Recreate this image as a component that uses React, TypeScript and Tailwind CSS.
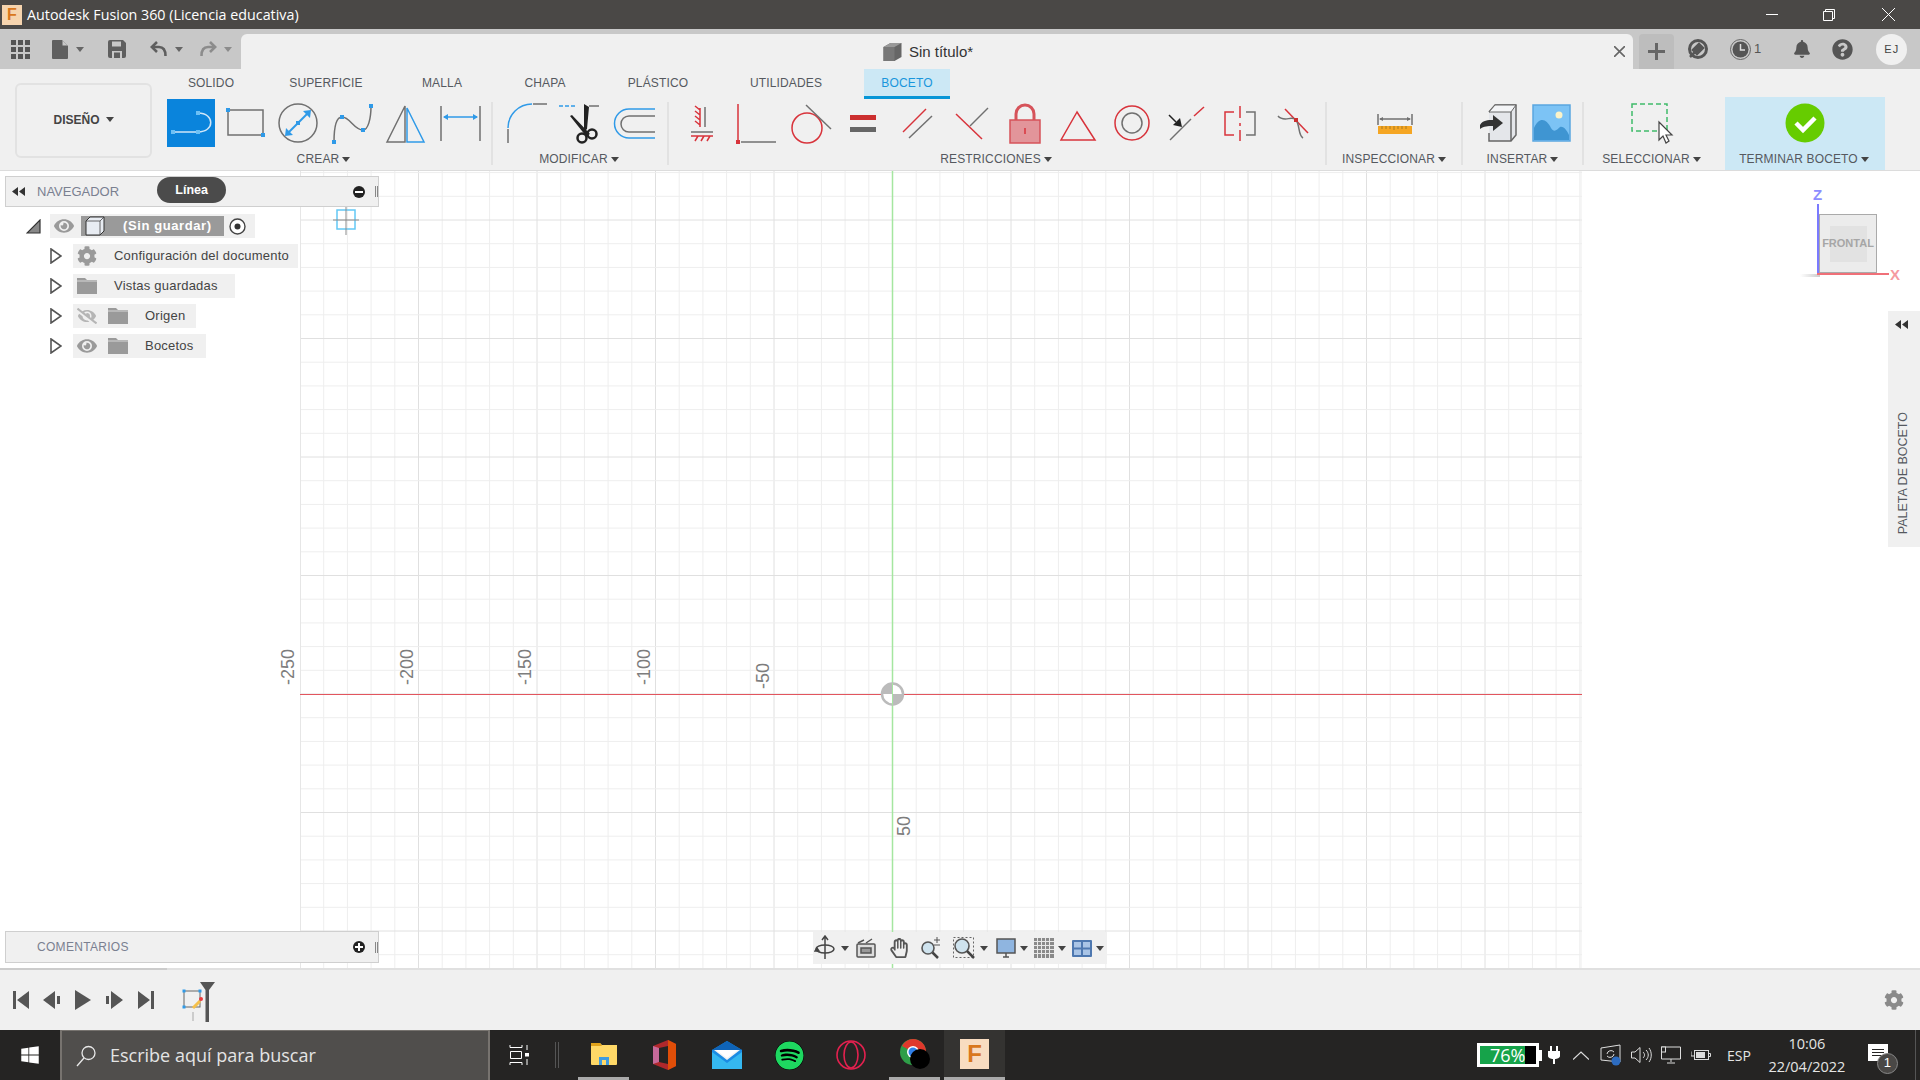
import React from "react";
import { FaBell, FaCog, FaEye, FaEyeSlash, FaQuestionCircle, FaRegHandPaper, FaSpotify, FaWindows } from "react-icons/fa";

const BLUE = "#2f9ae8";
const GRAY = "#707070";
const RED = "#d8333b";

const Caret: React.FC<{ className?: string; color?: string }> = ({ className = "", color = "#444" }) => (
  <svg width="8" height="5" viewBox="0 0 8 5" className={className}>
    <path d="M0 0H8L4 5Z" fill={color} />
  </svg>
);

const Rewind: React.FC = () => (
  <svg width="13" height="9" viewBox="0 0 13 9">
    <path d="M6 0V9L0 4.5ZM13 0V9L7 4.5Z" fill="#333" />
  </svg>
);

const Pt: React.FC<{ x: number; y: number; c?: string }> = ({ x, y, c = BLUE }) => (
  <rect x={x - 2} y={y - 2} width="4" height="4" fill={c} />
);

const Ic: React.FC<{ children: React.ReactNode }> = ({ children }) => (
  <svg width="48" height="48" viewBox="0 0 48 48" fill="none" strokeWidth="1.5">
    {children}
  </svg>
);

const tools = {
  line: (
    <div className="w-[48px] h-[48px] bg-[#0a84dc]">
      <Ic>
        <path d="M6 33H31" stroke="#cfe6f8" />
        <path d="M31 14C48 14 48 33 31 33" stroke="#cfe6f8" />
        <Pt x={6} y={33} c="#6cc0f5" />
        <Pt x={31} y={33} c="#6cc0f5" />
        <Pt x={31} y={14} c="#6cc0f5" />
      </Ic>
    </div>
  ),
  rect: (
    <Ic>
      <rect x="7" y="11" width="35" height="25" stroke={GRAY} />
      <Pt x={7} y={11} />
      <Pt x={42} y={36} />
    </Ic>
  ),
  circle: (
    <Ic>
      <circle cx="24" cy="24" r="19" stroke={GRAY} />
      <path d="M13 35L35 13" stroke={BLUE} strokeWidth="2" />
      <path d="M11 37L12 29L19 36ZM37 11L36 19L29 12Z" fill={BLUE} />
      <Pt x={24} y={24} />
    </Ic>
  ),
  spline: (
    <Ic>
      <path d="M6 43C6 30 8 18 14 18C22 18 26 31 35 31C40 31 43 20 43 7" stroke={GRAY} />
      <Pt x={6} y={43} />
      <Pt x={14} y={18} />
      <Pt x={35} y={31} />
      <Pt x={43} y={7} />
    </Ic>
  ),
  mirror: (
    <Ic>
      <path d="M5 43L23 7V43Z" stroke={GRAY} />
      <path d="M25 9L42 43H25Z" stroke={BLUE} />
    </Ic>
  ),
  dim: (
    <Ic>
      <path d="M6 7V42M45 7V42" stroke={GRAY} />
      <path d="M9 18H42" stroke={BLUE} />
      <path d="M8 18L13 15V21ZM43 18L38 15V21Z" fill={BLUE} />
    </Ic>
  ),
  fillet: (
    <Ic>
      <path d="M5 30V44M30 5H44" stroke={GRAY} />
      <path d="M5 29A24 24 0 0 1 29 5" stroke={BLUE} />
    </Ic>
  ),
  trim: (
    <Ic>
      <path d="M2 7H20" stroke={BLUE} strokeDasharray="4 2" />
      <path d="M32 7H42" stroke={GRAY} />
      <path d="M27 5L32 8L30 30L27 33ZM13 17L15 16L33 35L29 37Z" fill="#222" />
      <circle cx="25" cy="39" r="4.5" stroke="#222" strokeWidth="2.5" />
      <circle cx="35" cy="35" r="4.5" stroke="#222" strokeWidth="2.5" />
    </Ic>
  ),
  offset: (
    <Ic>
      <path d="M44 10H18A14.5 14.5 0 0 0 18 39H44" stroke={BLUE} />
      <path d="M44 17H18A8 8 0 0 0 18 33H44" stroke={GRAY} />
    </Ic>
  ),
  fix: (
    <Ic>
      <path d="M27 8V28M13 33H35" stroke={GRAY} />
      <path d="M13 37H35M22 9V28M22 11L17 7M22 16L17 12M22 21L17 17M22 26L17 22M17 42L20 37M23 42L26 37M29 42L32 37" stroke={RED} />
    </Ic>
  ),
  coincident: (
    <Ic>
      <path d="M6 5V41" stroke={RED} />
      <path d="M9 43H44" stroke={GRAY} />
      <Pt x={6} y={43} c={RED} />
    </Ic>
  ),
  tangent: (
    <Ic>
      <circle cx="22" cy="29" r="15" stroke={RED} />
      <path d="M21 6L46 30" stroke={GRAY} />
    </Ic>
  ),
  equal: (
    <Ic>
      <rect x="11" y="16" width="26" height="5" fill="#cc2f2f" />
      <rect x="11" y="28" width="26" height="5" fill="#666" />
    </Ic>
  ),
  parallel: (
    <Ic>
      <path d="M10 33L33 10" stroke={RED} />
      <path d="M16 39L39 17" stroke={GRAY} />
    </Ic>
  ),
  perp: (
    <Ic>
      <path d="M9 15L35 40" stroke={RED} />
      <path d="M23 27L41 9" stroke={GRAY} />
    </Ic>
  ),
  lock: (
    <Ic>
      <path d="M15 21V15A9 9 0 0 1 33 15V21" stroke="#d6535a" strokeWidth="3" />
      <rect x="9" y="21" width="30" height="23" fill="#e2959a" stroke="#d6535a" strokeWidth="1.5" />
      <path d="M24 29V35" stroke={RED} />
    </Ic>
  ),
  triangle: (
    <Ic>
      <path d="M23 13L7 41H41Z" stroke={RED} />
    </Ic>
  ),
  concentric: (
    <Ic>
      <circle cx="24" cy="24" r="17" stroke={RED} />
      <circle cx="24" cy="24" r="10" stroke={GRAY} />
    </Ic>
  ),
  midpoint: (
    <Ic>
      <path d="M8 41L29 20" stroke={GRAY} />
      <path d="M32 17L42 8" stroke={RED} />
      <path d="M7 16L14 23" stroke="#222" />
      <path d="M20 28L11 26L18 19Z" fill="#222" />
    </Ic>
  ),
  symmetry: (
    <Ic>
      <path d="M24 7V19M24 24V27M24 31V42" stroke={RED} />
      <path d="M18 13H9V36H18" stroke={RED} />
      <path d="M30 13H39V36H30" stroke={GRAY} />
    </Ic>
  ),
  intersect: (
    <Ic>
      <path d="M15 10L38 34" stroke={RED} />
      <path d="M8 17C14 24 22 16 26 21C30 26 28 36 33 39" stroke={GRAY} />
      <Pt x={26} y={21} c="#cc2f2f" />
    </Ic>
  ),
  ruler: (
    <Ic>
      <path d="M7 15V26M41 15V26" stroke={GRAY} />
      <path d="M9 20H39" stroke={GRAY} />
      <path d="M8 20L12 18V22ZM40 20L36 18V22Z" fill={GRAY} />
      <rect x="7" y="27" width="34" height="8" fill="#f5a623" />
      <path d="M11 27V30M15 27V30M19 27V30M23 27V31M27 27V30M31 27V30M35 27V30" stroke="#a87a20" strokeWidth="1" />
    </Ic>
  ),
  insert: (
    <Ic>
      <path d="M14 13L20 6H41V36L36 42H14V34" fill="#e4e6ea" stroke="#666" />
      <path d="M20 6H41L36 13H14Z" fill="#f4f5f7" stroke="#666" strokeWidth="1" />
      <path d="M36 13V42" stroke="#666" />
      <path d="M5 26C8 21 13 21 18 21V16L28 24L18 32V27C13 27 9 27 5 30Z" fill="#333" />
    </Ic>
  ),
  image: (
    <Ic>
      <rect x="6" y="6" width="37" height="36" fill="#7cc3f5" stroke="#5aa6e0" />
      <circle cx="32" cy="16" r="3.5" fill="#fbf3c8" />
      <path d="M7 41V29C12 18 19 19 24 29C27 34 30 31 33 28C37 27 40 32 42 36V41Z" fill="#3f95d2" />
    </Ic>
  ),
  select: (
    <Ic>
      <rect x="6" y="5" width="35" height="27" stroke="#3fbb6a" strokeDasharray="5 3" />
      <path d="M33 23V41L37 37L40 44L43 42L40 36H46Z" fill="#fff" stroke="#444" strokeWidth="1.2" />
    </Ic>
  ),
  finish: (
    <Ic>
      <circle cx="24" cy="24" r="19.5" fill="#66cc00" />
      <path d="M15 24L22 31L34 19" stroke="#fff" strokeWidth="4.5" />
    </Ic>
  ),
};

const Group: React.FC<{
  label: string;
  icons: React.ReactNode[];
  width: string;
  pad: string;
  step: string;
  labelPad?: string;
  sep?: boolean;
}> = ({ label, icons, width, pad, step, labelPad = "", sep = true }) => (
  <div className={`${width} flex shrink-0`}>
    <div className="flex-1 flex flex-col">
      <div className={`${pad} flex h-[50px] items-end`}>
        {icons.map((icon, i) => (
          <div key={i} className={`${step} flex justify-center`}>
            {icon}
          </div>
        ))}
      </div>
      <div className={`${labelPad} flex items-center justify-center gap-[3px] mt-[3px] text-[12px] tracking-[0.15px] text-[#55595f]`}>
        {label}
        <Caret />
      </div>
    </div>
    {sep && <div className="w-[2px] h-[63px] mt-[5px] bg-[#e2e2e2]" />}
  </div>
);

const TitleBar: React.FC = () => (
  <div className="h-[29px] bg-[#4a4846] flex items-center text-white">
    <div className="ml-[2px] w-[20px] h-[20px] bg-[#f6d4ae] flex items-center justify-center text-[#d9771c] text-[16px] font-bold">F</div>
    <span className="ml-[5px] text-[14.3px] font-['Open_Sans',sans-serif]">Autodesk Fusion 360 (Licencia educativa)</span>
    <div className="ml-auto flex items-center">
      <div className="w-[12px] h-px bg-white mr-[45px]" />
      <svg width="12" height="12" viewBox="0 0 12 12" fill="none" stroke="#fff" className="mr-[47px]">
        <path d="M0.5 2.5H9.5V11.5H0.5ZM2.5 2.5V0.5H11.5V9.5H9.5" />
      </svg>
      <svg width="13" height="13" viewBox="0 0 13 13" stroke="#fff" className="mr-[25px]">
        <path d="M0 0L13 13M13 0L0 13" />
      </svg>
    </div>
  </div>
);

const Undo: React.FC<{ color: string; className: string }> = ({ color, className }) => (
  <svg width="17" height="16" viewBox="0 0 17 16" fill="none" stroke={color} strokeWidth="2.6" className={className}>
    <path d="M7 1L1.8 6L7 11" />
    <path d="M2 6H9C13 6 15.5 9 15.5 15" />
  </svg>
);

const QuickBar: React.FC = () => (
  <div className="h-[40px] bg-[#c8c8c8] flex items-end">
    <div className="w-[241px] h-[40px] flex items-center shrink-0">
      <div className="ml-[11px] grid grid-cols-3 gap-[2px]">
        {Array.from({ length: 9 }).map((_, i) => (
          <div key={i} className="w-[5px] h-[5px] bg-[#555]" />
        ))}
      </div>
      <svg width="16" height="19" viewBox="0 0 16 19" className="ml-[22px]">
        <path d="M0 1Q0 0 1 0H10L16 6V18Q16 19 15 19H1Q0 19 0 18Z" fill="#5f5f5f" />
        <path d="M10.5 0.5L15.5 5.5H10.5Z" fill="#c8c8c8" />
      </svg>
      <Caret className="ml-[8px]" color="#666" />
      <svg width="18" height="18" viewBox="0 0 18 18" className="ml-[24px]">
        <path d="M0 2Q0 0 2 0H15L18 3V16Q18 18 16 18H2Q0 18 0 16Z" fill="#5f5f5f" />
        <rect x="4" y="1.5" width="9" height="5" fill="#c8c8c8" />
        <rect x="4" y="11" width="10" height="7" fill="#c8c8c8" />
        <rect x="6" y="12.5" width="6" height="5.5" fill="#5f5f5f" />
      </svg>
      <Undo color="#5f5f5f" className="ml-[24px]" />
      <Caret className="ml-[8px]" color="#666" />
      <Undo color="#8c8c8c" className="ml-[17px] -scale-x-100" />
      <Caret className="ml-[7px]" color="#8c8c8c" />
    </div>
    <div className="w-[1392px] h-[35px] bg-[#f0f0f0] rounded-t-[6px] flex items-center shrink-0">
      <div className="flex-1 flex items-center justify-center">
        <svg width="21" height="20" viewBox="0 0 20 20">
          <path d="M1 5L8 1H19V15L12 19H1Z" fill="#666" />
          <path d="M1 5L8 1H19L12 5Z" fill="#999" />
          <path d="M1 5H12V19H1Z" fill="#777" />
        </svg>
        <span className="ml-[6px] mt-[1px] text-[15px] text-[#333]">Sin título*</span>
      </div>
      <svg width="11" height="11" viewBox="0 0 11 11" stroke="#666" strokeWidth="1.6" className="mr-[8px]">
        <path d="M0 0L11 11M11 0L0 11" />
      </svg>
    </div>
    <div className="ml-[6px] w-[35px] h-[35px] bg-[#bdbdbd] rounded-t-[4px] flex items-center justify-center text-[#666] shrink-0">
      <svg width="17" height="17" viewBox="0 0 17 17">
        <path d="M7 0H10V7H17V10H10V17H7V10H0V7H7Z" fill="#666" />
      </svg>
    </div>
    <div className="h-[40px] flex items-center">
      <svg width="20" height="20" viewBox="0 0 20 20" className="ml-[14px]">
        <circle cx="10" cy="10" r="8.5" fill="none" stroke="#555" strokeWidth="3" />
        <path d="M5 11L11 5L15 9L9 15ZM2 18L7 13" fill="#555" stroke="#555" strokeWidth="2.5" />
      </svg>
      <svg width="21" height="21" viewBox="0 0 21 21" fill="none" className="ml-[22px]">
        <circle cx="10.5" cy="10.5" r="10" stroke="#666" />
        <circle cx="10.5" cy="10.5" r="8" fill="#555" />
        <path d="M10.5 5V11H15" stroke="#ddd" strokeWidth="1.5" />
      </svg>
      <span className="ml-[3px] text-[13px] text-[#555]">1</span>
      <FaBell className="ml-[32px] text-[#555] text-[18px]" />
      <FaQuestionCircle className="ml-[21px] text-[#555] text-[21px]" />
      <div className="ml-[23px] w-[31px] h-[31px] rounded-full bg-[#f0f0f0] flex items-center justify-center text-[11px] text-[#444] tracking-[1px]">EJ</div>
    </div>
  </div>
);

const Ribbon: React.FC = () => {
  const tabs = [
    { name: "SOLIDO", w: "w-[104px]" },
    { name: "SUPERFICIE", w: "w-[126px]" },
    { name: "MALLA", w: "w-[106px]" },
    { name: "CHAPA", w: "w-[100px]" },
    { name: "PLÁSTICO", w: "w-[126px]" },
    { name: "UTILIDADES", w: "w-[130px]" },
  ];
  return (
    <div className="h-[102px] bg-[#f0f0f0] border-b border-[#dcdcdc] flex">
      <div className="ml-[15px] mt-[14px] pb-[2px] w-[137px] h-[75px] shrink-0 border-2 border-[#e2e2e2] rounded-[6px] flex items-center justify-center gap-[6px] text-[12px] font-bold text-[#444]">
        DISEÑO
        <Caret />
      </div>
      <div className="ml-[7px] flex flex-col">
        <div className="h-[28px] flex items-start text-[12px] tracking-[0.15px] text-[#55595f]">
          {tabs.map((t) => (
            <div key={t.name} className={`${t.w} h-[27px] flex items-center justify-center`}>
              {t.name}
            </div>
          ))}
          <div className="ml-[13px] w-[86px] h-[30px] flex items-center justify-center bg-[#cce8f5] border-b-[3px] border-[#0696d7] text-[#1a96dc]">BOCETO</div>
        </div>
        <div className="flex flex-1 pl-[5px]">
          <Group
            label="CREAR"
            width="w-[329px]"
            pad="pl-0"
            step="w-[53.7px]"
            labelPad="pr-[8px]"
            icons={[tools.line, tools.rect, tools.circle, tools.spline, tools.mirror, tools.dim]}
          />
          <Group label="MODIFICAR" width="w-[176px]" pad="pl-[7px]" step="w-[54px]" labelPad="pr-[2px]" icons={[tools.fillet, tools.trim, tools.offset]} />
          <Group
            label="RESTRICCIONES"
            width="w-[658px]"
            pad="pl-[6px]"
            step="w-[53.8px]"
            labelPad="pr-[2px]"
            icons={[
              tools.fix,
              tools.coincident,
              tools.tangent,
              tools.equal,
              tools.parallel,
              tools.perp,
              tools.lock,
              tools.triangle,
              tools.concentric,
              tools.midpoint,
              tools.symmetry,
              tools.intersect,
            ]}
          />
          <Group label="INSPECCIONAR" width="w-[136px]" pad="pl-[44px]" step="w-[48px]" icons={[tools.ruler]} />
          <Group label="INSERTAR" width="w-[121px]" pad="pl-[10px]" step="w-[52px]" icons={[tools.insert, tools.image]} />
          <Group label="SELECCIONAR" width="w-[141px]" pad="pl-[42px]" step="w-[48px]" labelPad="pr-[6px]" sep={false} icons={[tools.select]} />
          <div className="w-[160px] bg-[#cce8f5]">
            <Group label="TERMINAR BOCETO" width="w-[160px]" pad="pl-[56px]" step="w-[48px]" labelPad="pr-[2px]" sep={false} icons={[tools.finish]} />
          </div>
        </div>
      </div>
    </div>
  );
};

const GridLines: React.FC = () => {
  const step = 23.7;
  const xs: number[] = [];
  const ys: number[] = [];
  for (let i = -25; i <= 30; i++) xs.push(i);
  for (let i = -22; i <= 15; i++) ys.push(i);
  return (
    <svg width="1282" height="797" className="absolute left-[300px] top-0">
      {xs.map((i) => {
        const x = 592.5 + i * step;
        if (x < 0 || x > 1281) return null;
        return <line key={i} x1={x} x2={x} y1="0" y2="797" stroke={i % 5 === 0 ? "#e0e0e0" : "#eeeeee"} strokeWidth="1" />;
      })}
      {ys.map((i) => {
        const y = 523 + i * step;
        if (y < 0 || y > 797) return null;
        return <line key={i} x1="0" x2="1282" y1={y} y2={y} stroke={i % 5 === 0 ? "#e0e0e0" : "#eeeeee"} strokeWidth="1" />;
      })}
      <line x1="0" x2="0" y1="0" y2="797" stroke="#e6e6e6" strokeWidth="2" />
      <line x1="1281" x2="1281" y1="0" y2="797" stroke="#eeeeee" strokeWidth="1" />
      <line x1="592.5" x2="592.5" y1="0" y2="797" stroke="#a5e6a0" strokeWidth="1.5" />
      <line x1="0" x2="1282" y1="523.5" y2="523.5" stroke="#e2555e" strokeWidth="1" />
      <circle cx="592.5" cy="523" r="10.5" fill="#fff" stroke="#bbb" strokeWidth="2.5" />
      <path d="M592.5 523V512.5A10.5 10.5 0 0 0 582 523ZM592.5 523V533.5A10.5 10.5 0 0 0 603 523Z" fill="#bbb" />
      <line x1="592.5" x2="592.5" y1="512" y2="534" stroke="#a5e6a0" strokeWidth="1" />
    </svg>
  );
};

const AxisLabel: React.FC<{ text: string; x: string; y: string }> = ({ text, x, y }) => (
  <span className={`absolute ${x} ${y} text-[18px] leading-none text-[#7d7d7d] [writing-mode:vertical-rl] rotate-180`}>{text}</span>
);

const Folder: React.FC = () => (
  <svg width="20" height="16" viewBox="0 0 20 16">
    <path d="M0 0H8L10 2H20V16H0Z" fill="#9a9a9a" />
    <path d="M0 3H20" stroke="#f0f0f0" strokeWidth="0.7" />
  </svg>
);

const Arrow: React.FC = () => (
  <svg width="12" height="16" viewBox="0 0 12 16" fill="none" stroke="#555" strokeWidth="1.6">
    <path d="M1 1L11 8L1 15Z" />
  </svg>
);

const TreeRow: React.FC<{ icons: React.ReactNode; label: string; width: string }> = ({ icons, label, width }) => (
  <div className="flex items-center h-[24px] mb-[6px]">
    <div className="w-[73px] pl-[50px] flex items-center">
      <Arrow />
    </div>
    <div className={`${width} h-[24px] bg-[#f0f0f0] flex items-center pl-[3px]`}>
      {icons}
      <span className="ml-[17px] text-[13px] tracking-[0.22px] text-[#444]">{label}</span>
    </div>
  </div>
);

const Navigator: React.FC = () => (
  <div className="absolute left-0 top-[5px]">
    <div className="ml-[5px] w-[374px] h-[31px] bg-[#f0f0f0] border border-[#cfcfcf] flex items-center">
      <div className="ml-[6px]">
        <Rewind />
      </div>
      <span className="ml-[12px] text-[13px] text-[#7a8090]">NAVEGADOR</span>
      <div className="ml-[38px] w-[69px] h-[26px] -mt-[3px] rounded-full bg-[#4b4b4b] text-white text-[12.5px] font-bold flex items-center justify-center">Línea</div>
      <div className="ml-auto w-[12px] h-[12px] mr-[10px] rounded-full bg-[#222] flex items-center justify-center">
        <div className="w-[8px] h-[2px] bg-white" />
      </div>
      <div className="w-[3px] h-[11px] border-x border-[#888]" />
    </div>
    <div className="mt-[7px] flex items-center h-[24px] mb-[6px]">
      <div className="w-[50px] pl-[26px]">
        <svg width="15" height="15" viewBox="0 0 15 15">
          <path d="M14 1V14H1Z" fill="#888" stroke="#333" strokeWidth="1.2" />
        </svg>
      </div>
      <div className="w-[205px] h-[24px] bg-[#f0f0f0] flex items-center">
        <FaEye className="ml-[4px] text-[#9a9a9a] text-[20px]" />
        <div className="ml-[7px] w-[143px] h-[20px] bg-[#9a9a9a] flex items-center">
          <svg width="20" height="20" viewBox="0 0 20 20" className="ml-[4px]">
            <path d="M1 5L5 1H19V15L15 19H1Z" fill="#e8ecf2" stroke="#333" />
            <path d="M15 5V19M15 5L19 1M1 5H15" fill="none" stroke="#444" strokeWidth="0.8" />
          </svg>
          <span className="ml-[18px] text-[13px] font-bold tracking-[0.6px] text-white">(Sin guardar)</span>
        </div>
        <svg width="17" height="17" viewBox="0 0 17 17" className="ml-[5px]">
          <circle cx="8.5" cy="8.5" r="7.5" fill="#fff" stroke="#444" strokeWidth="1.4" />
          <circle cx="8.5" cy="8.5" r="3" fill="#333" />
        </svg>
      </div>
    </div>
    <TreeRow width="w-[225px]" label="Configuración del documento" icons={<FaCog className="ml-[1px] text-[#9a9a9a] text-[20px]" />} />
    <TreeRow width="w-[162px]" label="Vistas guardadas" icons={<div className="ml-[1px]"><Folder /></div>} />
    <TreeRow
      width="w-[123px]"
      label="Origen"
      icons={
        <>
          <FaEyeSlash className="ml-[1px] text-[#b5b5b5] text-[20px]" />
          <div className="ml-[11px]">
            <Folder />
          </div>
        </>
      }
    />
    <TreeRow
      width="w-[133px]"
      label="Bocetos"
      icons={
        <>
          <FaEye className="ml-[1px] text-[#9a9a9a] text-[20px]" />
          <div className="ml-[11px]">
            <Folder />
          </div>
        </>
      }
    />
  </div>
);

const Comments: React.FC = () => (
  <div className="absolute left-[5px] top-[760px] w-[374px] h-[32px] bg-[#f0f0f0] border border-[#cfcfcf] flex items-center">
    <span className="ml-[31px] text-[12px] tracking-[0.3px] text-[#7a8090]">COMENTARIOS</span>
    <div className="ml-auto w-[12px] h-[12px] mr-[10px] rounded-full bg-[#222] flex items-center justify-center text-white">
      <svg width="8" height="8" viewBox="0 0 8 8">
        <path d="M3 0H5V3H8V5H5V8H3V5H0V3H3Z" fill="#fff" />
      </svg>
    </div>
    <div className="w-[3px] h-[11px] border-x border-[#888]" />
  </div>
);

const NavBar: React.FC = () => (
  <div className="absolute left-[813px] top-[761px] w-[294px] h-[32px] bg-[#f0f0f0] flex items-center pl-[1px]">
    <svg width="22" height="26" viewBox="0 0 22 26" fill="none" stroke="#444" strokeWidth="1.5">
      <path d="M11 2V24M8 5L11 1L14 5" />
      <ellipse cx="11" cy="14" rx="9" ry="4" />
      <path d="M3 13L1 16H5Z" fill="#444" />
    </svg>
    <Caret className="ml-[5px]" />
    <svg width="20" height="20" viewBox="0 0 20 20" fill="none" stroke="#555" strokeWidth="1.5" className="ml-[7px]">
      <rect x="1" y="6" width="18" height="13" rx="1" fill="#ddd" />
      <rect x="5" y="10" width="10" height="5" fill="#999" />
      <path d="M2 5L8 2M10 5L16 1" />
    </svg>
    <FaRegHandPaper className="ml-[13px] text-[#555] text-[20px]" />
    <svg width="22" height="22" viewBox="0 0 22 22" fill="none" className="ml-[11px]">
      <circle cx="8" cy="11" r="6" fill="#cfe3ee" stroke="#555" strokeWidth="1.6" />
      <path d="M12.5 15.5L18 21" stroke="#444" strokeWidth="2.5" />
      <path d="M14 3H20M17 0V6M14 8H20" stroke="#555" />
    </svg>
    <svg width="22" height="22" viewBox="0 0 22 22" fill="none" className="ml-[11px]">
      <rect x="0.5" y="0.5" width="20" height="20" stroke="#666" strokeDasharray="2 2" />
      <circle cx="9" cy="9" r="7" fill="#cfe3ee" stroke="#555" strokeWidth="1.6" />
      <path d="M14 14L21 21" stroke="#444" strokeWidth="2.5" />
    </svg>
    <Caret className="ml-[5px]" />
    <svg width="20" height="20" viewBox="0 0 20 20" fill="none" className="ml-[8px]">
      <rect x="1" y="1" width="18" height="14" fill="#8fb5e0" stroke="#555" strokeWidth="1.5" />
      <path d="M7 19H13M10 15V19" stroke="#555" strokeWidth="1.5" />
    </svg>
    <Caret className="ml-[4px]" />
    <svg width="20" height="20" viewBox="0 0 20 20" className="ml-[6px]">
      <rect width="20" height="20" fill="#8a8a8a" />
      <path d="M0 3.5H20M0 7.5H20M0 11.5H20M0 15.5H20M3.5 0V20M7.5 0V20M11.5 0V20M15.5 0V20" stroke="#e8e8e8" strokeWidth="1" />
    </svg>
    <Caret className="ml-[4px]" />
    <svg width="20" height="17" viewBox="0 0 20 17" className="ml-[6px]">
      <rect width="20" height="17" fill="#4e78b0" rx="1" />
      <path d="M2 2H9V7.5H2ZM11 2H18V7.5H11ZM2 9.5H9V15H2ZM11 9.5H18V15H11Z" fill="#a9c4e6" />
    </svg>
    <Caret className="ml-[4px]" />
  </div>
);

const ViewCube: React.FC = () => (
  <>
    <span className="absolute left-[1813px] top-[16px] text-[15px] font-bold leading-none text-[#8d8dff]">Z</span>
    <div className="absolute left-[1800px] top-[103px] w-[20px] h-[3px] bg-gradient-to-r from-transparent to-[#cccccc]" />
    <div className="absolute left-[1819px] top-[43px] w-[58px] h-[59px] border border-[#aaa] bg-[#ececec] flex items-center justify-center">
      <div className="w-[37px] h-[36px] bg-[#e2e2e2] flex items-center justify-center">
        <span className="text-[11px] font-bold text-[#a6a6a6]">FRONTAL</span>
      </div>
    </div>
    <div className="absolute left-[1817px] top-[33px] w-[2px] h-[70px] bg-[#7a7aff]" />
    <div className="absolute left-[1817px] top-[102px] w-[72px] h-[2px] bg-[#f07078]" />
    <span className="absolute left-[1890px] top-[96px] text-[15px] font-bold leading-none text-[#f59aa0]">X</span>
  </>
);

const Palette: React.FC = () => (
  <div className="absolute right-0 top-[140px] w-[32px] h-[236px] bg-[#f0f0f0] flex flex-col items-center">
    <div className="mt-[9px] mr-[6px]">
      <Rewind />
    </div>
    <span className="mt-[83px] mr-[2px] text-[12.5px] text-[#55595f] [writing-mode:vertical-rl] rotate-180">PALETA DE BOCETO</span>
  </div>
);

const Canvas: React.FC = () => (
  <div className="relative flex-1 bg-white overflow-hidden">
    <GridLines />
    <AxisLabel text="-250" x="left-[279px]" y="top-[478px]" />
    <AxisLabel text="-200" x="left-[398px]" y="top-[478px]" />
    <AxisLabel text="-150" x="left-[516px]" y="top-[478px]" />
    <AxisLabel text="-100" x="left-[635px]" y="top-[478px]" />
    <AxisLabel text="-50" x="left-[754px]" y="top-[492px]" />
    <AxisLabel text="50" x="left-[895px]" y="top-[645px]" />
    <svg width="30" height="30" viewBox="0 0 30 30" fill="none" className="absolute left-[331px] top-[34px]">
      <rect x="6" y="5" width="18" height="19" stroke="#63c8f5" strokeWidth="1.5" />
      <path d="M15 0V30M2 15H28" stroke="#8a8a8a" />
    </svg>
    <Navigator />
    <Comments />
    <NavBar />
    <ViewCube />
    <Palette />
  </div>
);

const Timeline: React.FC = () => (
  <div className="h-[62px] bg-[#f0f0f0] border-t-2 border-[#e0e0e0] flex items-center relative">
    <div className="absolute left-0 -top-[2px] w-[167px] h-[2px] bg-[#cccccc]" />
    <div className="flex items-center ml-[13px]">
      <svg width="16" height="18" viewBox="0 0 16 18">
        <path d="M0 0H3V18H0ZM16 0V18L4 9Z" fill="#555" />
      </svg>
      <svg width="17" height="18" viewBox="0 0 17 18" className="ml-[14px]">
        <path d="M12 0V18L0 9ZM14 5H17V13H14Z" fill="#555" />
      </svg>
      <svg width="16" height="20" viewBox="0 0 16 20" className="ml-[15px]">
        <path d="M0 0L16 10L0 20Z" fill="#555" />
      </svg>
      <svg width="17" height="18" viewBox="0 0 17 18" className="ml-[15px]">
        <path d="M5 0V18L17 9ZM0 5H3V13H0Z" fill="#555" />
      </svg>
      <svg width="16" height="18" viewBox="0 0 16 18" className="ml-[15px]">
        <path d="M0 0V18L12 9ZM13 0H16V18H13Z" fill="#555" />
      </svg>
      <svg width="36" height="40" viewBox="0 0 36 40" fill="none" className="ml-[28px] mt-[4px]">
        <rect x="2" y="9" width="16" height="16" stroke="#666" />
        <rect x="0.5" y="7.5" width="3" height="3" fill={BLUE} />
        <rect x="16.5" y="7.5" width="3" height="3" fill={BLUE} />
        <rect x="0.5" y="23.5" width="3" height="3" fill={BLUE} />
        <path d="M11 26L18 19" stroke="#f5c04a" strokeWidth="3" />
        <circle cx="19" cy="17" r="2" fill="#ee3b3b" />
        <rect x="10" y="30" width="2" height="9" fill="#ccc" />
        <path d="M18 0H33L27 8V40H23.5V8Z" fill="#555" />
      </svg>
    </div>
    <FaCog className="ml-auto mr-[16px] text-[#8a8a8a] text-[20px]" />
  </div>
);

const Taskbar: React.FC = () => (
  <div className="h-[50px] bg-[#252423] flex items-center text-white">
    <div className="w-[60px] flex justify-center">
      <FaWindows className="text-[20px]" />
    </div>
    <div className="w-[430px] h-[50px] bg-[#504e4c] border-x-2 border-t border-[#77736f] flex items-center">
      <svg width="20" height="22" viewBox="0 0 20 22" fill="none" stroke="#e8e8e8" strokeWidth="1.3" className="ml-[14px]">
        <circle cx="12.5" cy="8" r="6.5" />
        <path d="M8 13L1 21" />
      </svg>
      <span className="ml-[14px] text-[18px] text-[#e4e4e4] font-['Open_Sans',sans-serif]">Escribe aquí para buscar</span>
    </div>
    <svg width="20" height="20" viewBox="0 0 20 20" fill="none" stroke="#fff" className="ml-[19px]">
      <path d="M1 0V2.5H13V0M1.5 6.5H12.5V13.5H1.5ZM1 20V17.5H13V20M18 0V5M18 14V20" />
      <rect x="16" y="8" width="4" height="3.5" fill="#fff" stroke="none" />
    </svg>
    <div className="ml-[26px] w-[4px] h-[26px] border-x border-[#555]" />
    <div className="ml-[19px] w-[51px] h-[50px] flex items-center justify-center border-b-[3px] border-[#aaa]">
      <svg width="28" height="24" viewBox="0 0 28 24">
        <path d="M1 3C1 1 2 1 3 1H10L12 3H27V22C27 23 26 23 25 23H3C2 23 1 23 1 22Z" fill="#ffd867" />
        <path d="M1 1H10L12 4H1Z" fill="#e0a21b" />
        <path d="M9 23V15H19V23H16V18H12V23Z" fill="#3e9be0" />
      </svg>
    </div>
    <svg width="24" height="30" viewBox="0 0 24 30" className="ml-[24px]">
      <path d="M0 6L15 0L23 4V26L15 30L0 24Z" fill="#b0282c" />
      <path d="M15 0L23 4V26L15 30Z" fill="#e04e08" />
      <path d="M6 8L15 6V24L6 22Z" fill="#252423" />
      <path d="M0 6L6 8V22L0 24Z" fill="#c66a9a" />
    </svg>
    <svg width="30" height="28" viewBox="0 0 30 28" className="ml-[35px]">
      <path d="M0 9L15 0L30 9V28H0Z" fill="#1b8ce3" />
      <path d="M2 9H28L15 19Z" fill="#f2f2f2" />
      <path d="M0 11L15 22L30 11V28H0Z" fill="#35b8f0" />
      <path d="M15 0L30 9H0Z" fill="#0f64b8" />
      <path d="M4 9H26L15 17Z" fill="#fff" />
    </svg>
    <FaSpotify className="ml-[33px] text-[#1ed760] text-[29px] bg-black rounded-full" />
    <svg width="30" height="30" viewBox="0 0 30 30" fill="none" stroke="#e3214f" strokeWidth="1.6" className="ml-[32px]">
      <circle cx="15" cy="15" r="14" />
      <ellipse cx="15" cy="15" rx="7" ry="13" />
    </svg>
    <div className="ml-[23px] w-[51px] h-[50px] pl-[10px] pt-[8px] border-b-[3px] border-[#aaa]">
      <svg width="34" height="32" viewBox="0 0 34 32">
        <circle cx="14" cy="14" r="13" fill="#2e9e48" />
        <path d="M14 1A13 13 0 0 1 27 14H14L3 8A13 13 0 0 1 14 1Z" fill="#e0382c" />
        <path d="M27 14A13 13 0 0 1 14 27L14 14Z" fill="#f7c62c" />
        <circle cx="14" cy="14" r="6" fill="#fff" />
        <circle cx="14" cy="14" r="4.5" fill="#2f7fe8" />
        <circle cx="21" cy="21" r="10" fill="#000" />
      </svg>
    </div>
    <div className="ml-[4px] w-[61px] h-[50px] bg-[#343331] border-b-[3px] border-[#aaa] flex items-center justify-center">
      <div className="w-[29px] h-[30px] bg-[#f8dcc0] flex items-center justify-center text-[#d9771c] text-[24px] font-bold leading-none">F</div>
    </div>
    <div className="ml-[472px] w-[62px] h-[24px] border-[3px] border-white bg-black relative flex items-center">
      <div className="w-[45px] h-full bg-[#16a34a]" />
      <span className="absolute left-[10px] text-[18px] leading-none text-white font-['Open_Sans',sans-serif]">76%</span>
    </div>
    <div className="w-[3px] h-[11px] bg-white" />
    <svg width="12" height="18" viewBox="0 0 12 18" fill="#fff" className="ml-[6px]">
      <path d="M2 0H4V5H8V0H10V5H12V10C12 12 9 13 7 13V18H5V13C3 13 0 12 0 10V5H2Z" />
    </svg>
    <svg width="16" height="9" viewBox="0 0 16 9" fill="none" stroke="#ddd" strokeWidth="1.2" className="ml-[13px]">
      <path d="M0 8.5L8 1L16 8.5" />
    </svg>
    <svg width="22" height="22" viewBox="0 0 22 22" fill="none" stroke="#ddd" className="ml-[11px]">
      <path d="M1 4L20 1V18L1 16ZM7 10A4 4 0 0 1 14 8M14 10A4 4 0 0 1 7 12" />
      <circle cx="16" cy="17" r="4.5" fill="#2d6cc0" stroke="none" />
    </svg>
    <svg width="21" height="18" viewBox="0 0 21 18" fill="none" stroke="#ddd" className="ml-[9px]">
      <path d="M0.5 6H4L9 1.5V16.5L4 12H0.5ZM12 6C14 8 14 10 12 12M15 4C18 7 18 11 15 14M18 2C21 6 21 12 18 16" />
    </svg>
    <svg width="20" height="18" viewBox="0 0 20 18" fill="none" stroke="#ddd" className="ml-[9px]">
      <path d="M0.5 1H19.5V13H0.5ZM10 13V16M6 17H14" />
      <rect x="0.5" y="1" width="4" height="5" fill="#252423" />
    </svg>
    <svg width="20" height="12" viewBox="0 0 20 12" fill="none" stroke="#ddd" className="ml-[10px]">
      <rect x="3.5" y="1.5" width="14" height="9" />
      <rect x="5" y="3" width="9" height="6" fill="#ddd" stroke="none" />
      <path d="M18 4.5H19.5V7.5H18M0 2.5V7H3" />
    </svg>
    <span className="ml-[16px] text-[14px] text-[#e4e4e4] font-['Open_Sans',sans-serif]">ESP</span>
    <div className="ml-[16px] w-[80px] flex flex-col items-center text-[14.5px] leading-[23px] text-[#e4e4e4] font-['Open_Sans',sans-serif]">
      <span>10:06</span>
      <span>22/04/2022</span>
    </div>
    <div className="relative ml-[21px] w-[20px] h-[17px] bg-white -mt-[6px] flex flex-col items-center justify-center gap-[2px]">
      <div className="w-[12px] h-px bg-[#252423]" />
      <div className="w-[12px] h-px bg-[#252423]" />
      <div className="w-[12px] h-px bg-[#252423]" />
      <div className="absolute left-[9px] top-[9px] w-[21px] h-[21px] rounded-full bg-[#4a4846] border border-[#888] flex items-center justify-center text-[13px] text-white">1</div>
    </div>
    <div className="ml-auto mr-[4px] w-px h-[50px] bg-[#555]" />
  </div>
);

export default function App() {
  return (
    <div className="w-[1920px] h-[1080px] flex flex-col overflow-hidden bg-white font-['Liberation_Sans',sans-serif]">
      <TitleBar />
      <QuickBar />
      <Ribbon />
      <Canvas />
      <Timeline />
      <Taskbar />
    </div>
  );
}
